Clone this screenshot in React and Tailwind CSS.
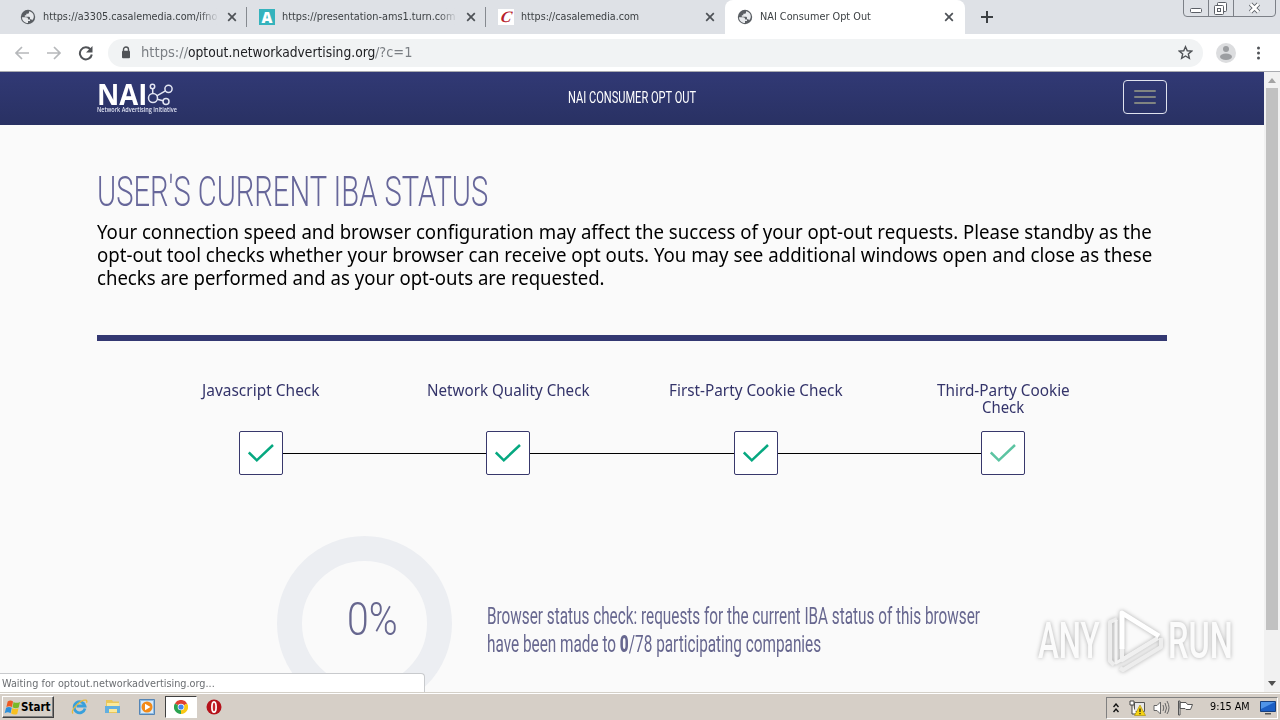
import React, { useLayoutEffect, useRef, useState } from "react";

const tabs = [
    { title: "https://a3305.casalemedia.com/ifno", icon: "globe", width: 174, fade: true },
    { title: "https://presentation-ams1.turn.com", icon: "turn", width: 174, fade: true },
    { title: "https://casalemedia.com", icon: "casale", width: 118 },
];

const intro = [
    { text: "Your connection speed and browser configuration may affect the success of your opt-out requests. Please standby as the", width: 1055 },
    { text: "opt-out tool checks whether your browser can receive opt outs. You may see additional windows open and close as these", width: 1055 },
    { text: "checks are performed and as your opt-outs are requested.", width: 508 },
];

const steps = [
    { lines: [{ text: "Javascript Check", width: 118 }] },
    { lines: [{ text: "Network Quality Check", width: 163 }] },
    { lines: [{ text: "First-Party Cookie Check", width: 174 }] },
    { lines: [{ text: "Third-Party Cookie", width: 133 }, { text: "Check", width: 42 }], pending: true },
];

// One line of text squeezed or stretched to a fixed width
function Fit({ width, className = "", children }) {
    const ref = useRef(null);
    const [scale, setScale] = useState(1);

    useLayoutEffect(() => {
        setScale(width / ref.current.offsetWidth);
    }, [width]);

    return (
        <span className={`block shrink-0 whitespace-nowrap ${className}`} style={{ width }}>
            <span ref={ref} className="inline-block origin-left" style={{ transform: `scaleX(${scale})` }}>
                {children}
            </span>
        </span>
    );
}

function Globe() {
    return (
        <svg className="size-4 shrink-0" viewBox="0 0 16 16">
            <circle cx="8" cy="8" r="7.2" fill="#5a5e63" />
            <path d="M2 8.200h4q2.200.1 2.300 2.200H10v1.500H8v2.100C4.400 14 2 11.400 2 8.200Z" fill="#e8eaed" />
            <path d="M9 2.200V3.500q0 1.300-1.500 1.300H6.300v1.500H4.800v1.400H9q1 0 1 1.200v1.400h.8q1 0 1.300 1C15.500 8 13.500 3 9 2.200Z" fill="#e8eaed" />
        </svg>
    );
}

function TabIcon({ name }) {
    if (name === "turn") {
        return (
            <span className="flex size-4 shrink-0 items-center justify-center bg-[#35b3bd] font-['Open_Sans',sans-serif] text-[15px] leading-none font-extrabold text-white">A</span>
        );
    }
    if (name === "casale") {
        return (
            <span className="flex size-4 shrink-0 items-center justify-center bg-white font-['Liberation_Serif',serif] text-[16px] leading-none text-[#b8222d] italic">
                <span className="-skew-x-12 font-bold">C</span>
            </span>
        );
    }
    return <Globe />;
}

function Close() {
    return (
        <svg className="size-[10px] shrink-0" viewBox="0 0 10 10">
            <path d="m1.200 1.200 7.600 7.600m0-7.600L1.200 8.800" stroke="#4d5156" strokeWidth="1.700" />
        </svg>
    );
}

function WindowButtons() {
    return (
        <svg className="h-[17px] w-[93px] shrink-0" viewBox="0 0 93 17" fill="none" stroke="#7c8087">
            <path d="M.5 0v13q0 3.500 3.500 3.500h85q3.500 0 3.500-3.500V0M25.500 0v16.500M50.500 0v16.500" />
            <g stroke="#5b5f66">
                <rect x="7.500" y="8.500" width="11" height="4" rx="1" fill="#fff" />
                <rect x="34.500" y="2.500" width="9" height="9" rx="1" fill="#fff" />
                <rect x="31.500" y="5.500" width="9" height="9" rx="1" fill="#fff" />
                <rect x="34.500" y="8.500" width="3" height="3" />
            </g>
            <path d="m67.500 4 8 8m0-8-8 8" stroke="#5b5f66" strokeWidth="4.500" />
            <path d="m67.500 4 8 8m0-8-8 8" stroke="#fff" strokeWidth="2.600" />
        </svg>
    );
}

function TabStrip() {
    return (
        <div className="flex h-[34px] shrink-0 bg-[#dee1e6] font-['DejaVu_Sans_Condensed','DejaVu_Sans',sans-serif] text-[11px] text-[#3c4043]">
            {tabs.map((tab, i) => (
                <div key={tab.title} className={`flex items-center ${i === 0 ? "w-[247px] pl-5" : "w-[239px] pl-3"}`}>
                    <TabIcon name={tab.icon} />
                    <div className="relative ml-[7px] w-[176px] pt-px">
                        <Fit width={tab.width}>{tab.title}</Fit>
                        {tab.fade && <div className="absolute inset-y-0 right-0 w-5 bg-linear-to-r from-transparent to-[#dee1e6]" />}
                    </div>
                    <div className="ml-2 flex"><Close /></div>
                    {i < 2 && <div className="ml-auto h-5 w-px bg-[#868a90]" />}
                </div>
            ))}
            <div className="flex w-[240px] items-center rounded-t-lg bg-white pl-3">
                <Globe />
                <Fit width={111} className="ml-[7px] pt-px">NAI Consumer Opt Out</Fit>
                <div className="mr-[11px] ml-auto flex"><Close /></div>
            </div>
            <svg className="mt-[11px] ml-[16px] size-3 shrink-0" viewBox="0 0 12 12">
                <path d="M6 0v12M0 6h12" stroke="#3c4043" strokeWidth="2" />
            </svg>
            <div className="mr-[4px] ml-auto"><WindowButtons /></div>
        </div>
    );
}

function Toolbar() {
    return (
        <div className="flex h-[38px] shrink-0 items-center border-b border-[#a9abb0] bg-white">
            <svg className="ml-[14px] h-4 w-20 shrink-0" viewBox="0 0 80 16" fill="none">
                <path d="M15 8H2m6-6L2 8l6 6M33 8h13m-6-6 6 6-6 6" stroke="#b6b8bb" strokeWidth="1.700" />
                <path d="M76.500 4.500A6 6 0 1 0 77.800 9.500" stroke="#505357" strokeWidth="2" />
                <path d="M78.500 1v6.500H72Z" fill="#505357" />
            </svg>
            <div className="ml-[14px] flex h-[28px] w-[1095px] items-center rounded-full bg-[#f1f3f4] pr-[10px] pl-[13px]">
                <svg className="h-[13px] w-[10px] shrink-0" viewBox="0 0 10 13">
                    <path d="M2.500 5V3.500a2.500 2.500 0 0 1 5 0V5" fill="none" stroke="#505357" strokeWidth="1.400" />
                    <rect x="1" y="4.800" width="8" height="7.400" rx="1" fill="#505357" />
                </svg>
                <div className="ml-[10px] flex font-['DejaVu_Sans_Condensed','DejaVu_Sans',sans-serif] text-[14px] text-[#7b7f84]">
                    <Fit width={47}>https://</Fit>
                    <Fit width={187} className="text-[#202124]">optout.networkadvertising.org</Fit>
                    <Fit width={37}>/?c=1</Fit>
                </div>
                <svg className="ml-auto size-[15px]" viewBox="0 0 16 16" fill="none" stroke="#505357" strokeWidth="1.500">
                    <path d="m8 1.800 1.900 4.300 4.700.4-3.600 3.100 1.100 4.600L8 11.700l-4.100 2.500L5 9.600 1.400 6.500l4.700-.4Z" />
                </svg>
            </div>
            <svg className="ml-[13px] size-5 shrink-0" viewBox="0 0 20 20">
                <circle cx="10" cy="10" r="10" fill="#dcdddf" />
                <circle cx="10" cy="6" r="3" fill="#9c9ea1" />
                <ellipse cx="10" cy="13.700" rx="6" ry="3.200" fill="#9c9ea1" />
            </svg>
            <svg className="ml-[20px] h-[14px] w-1 shrink-0" viewBox="0 0 4 14" fill="#505357">
                <circle cx="2.500" cy="2" r="1.500" />
                <circle cx="2.500" cy="7" r="1.500" />
                <circle cx="2.500" cy="12" r="1.500" />
            </svg>
        </div>
    );
}

function Header() {
    return (
        <header className="flex h-[53px] items-start bg-linear-to-b from-[#313975] to-[#293163] pr-[97px] pl-[97px] text-white">
            <div className="mt-[11px] w-[80px] font-['Open_Sans',sans-serif]">
                <div className="flex h-[23px] items-start">
                    <Fit width={50} className="text-[28px] leading-[23px] font-bold">NAI</Fit>
                    <svg className="h-[23px] w-[27px] shrink-0" viewBox="0 0 27 23" fill="none" stroke="#e3e6f3" strokeWidth="1.500">
                        <circle cx="6" cy="15" r="4.500" />
                        <circle cx="5.500" cy="3.500" r="2.200" />
                        <circle cx="21.500" cy="5.800" r="3.600" />
                        <circle cx="19" cy="18.500" r="3" />
                        <path d="M5.700 5.700v4.800M9.800 12.800l8.600-5M10.300 16.300l5.700 1.400" />
                    </svg>
                </div>
                <Fit width={80} className="text-[7px] leading-[8px] font-semibold text-[#dfe2f2]">Network Advertising Initiative</Fit>
            </div>
            <Fit width={128} className="mt-[14px] ml-[391px] font-['Roboto',sans-serif] text-[16px] leading-6">NAI CONSUMER OPT OUT</Fit>
            <button className="mt-[8px] ml-auto flex h-[34px] w-[44px] flex-col items-center justify-center gap-1 rounded border border-[#dfe2ee]">
                <span className="h-[2px] w-[22px] rounded bg-[#808481]" />
                <span className="h-[2px] w-[22px] rounded bg-[#808481]" />
                <span className="h-[2px] w-[22px] rounded bg-[#808481]" />
            </button>
        </header>
    );
}

function Step({ pending }) {
    return (
        <div className="flex size-[44px] shrink-0 items-center justify-center rounded-[2px] border border-[#38386c] bg-white">
            <svg className="h-5 w-[26px]" viewBox="0 0 26 20" fill="none">
                <path d="m.8 9.500 8 7.800L25 2" stroke={pending ? "#5cc4a2" : "#06a880"} strokeWidth="2.500" />
            </svg>
        </div>
    );
}

function Checks() {
    return (
        <>
            <div className="mt-[41px] grid grid-cols-4 px-[40px] font-['Noto_Sans',sans-serif] text-[16px] leading-[17px] text-[#34346a]">
                {steps.map((step, i) => (
                    <div key={i} className="flex h-[49px] flex-col items-center">
                        {step.lines.map((line) => <Fit key={line.text} width={line.width}>{line.text}</Fit>)}
                    </div>
                ))}
            </div>
            <div className="flex items-center px-[142px]">
                {steps.map((step, i) => (
                    <React.Fragment key={i}>
                        {i > 0 && <div className="h-px flex-1 bg-black" />}
                        <Step pending={step.pending} />
                    </React.Fragment>
                ))}
            </div>
        </>
    );
}

function Progress() {
    return (
        <div className="mt-[61px] flex pl-[180px] font-['Roboto',sans-serif] text-[#67678f]">
            <div className="flex size-[175px] shrink-0 items-start justify-center rounded-full border-[25px] border-[#eceef2]">
                <Fit width={51} className="mt-[28px] ml-[16px] text-[46px] leading-[60px] font-light">0%</Fit>
            </div>
            <div className="mt-[67px] ml-[35px] text-[23px] leading-[28px]">
                <Fit width={493}>Browser status check: requests for the current IBA status of this browser</Fit>
                <Fit width={334}>have been made to <b className="font-black">0</b>/78 participating companies</Fit>
            </div>
        </div>
    );
}

function Watermark() {
    return (
        <div className="absolute top-[537px] left-[1038px] flex h-[64px] w-[195px] items-center justify-between font-['Roboto',sans-serif] text-[50px] leading-[64px] font-medium text-[#fbfbfb] drop-shadow-[0_0_2px_rgba(0,0,0,0.3)]">
            <Fit width={62}>ANY</Fit>
            <svg className="h-[64px] w-[58px] shrink-0" viewBox="0 0 58 64" fill="none" strokeLinejoin="round">
                <path d="M12 10 5 13v39l4 4M15 59l3 2 38-23v-9" stroke="#ededed" strokeWidth="4" />
                <path d="M11 11v43l40-24" stroke="#f3f3f3" strokeWidth="3" />
                <path d="M17 4v47l36-22" stroke="#f0f0f0" strokeWidth="4" />
                <path d="M17 40V4l37 23" stroke="#fff" strokeWidth="5" />
            </svg>
            <Fit width={65}>RUN</Fit>
        </div>
    );
}

function Scrollbar() {
    return (
        <div className="flex w-4 shrink-0 flex-col items-center justify-between bg-[#f1f1f1]">
            <svg className="mt-[6px] h-[5px] w-2 shrink-0" viewBox="0 0 8 5"><path d="m0 5 4-5 4 5Z" fill="#a3a3a3" /></svg>
            <div className="mt-[5px] mb-auto h-[542px] w-3 bg-[#c1c1c1]" />
            <svg className="mb-[6px] h-[5px] w-2 shrink-0" viewBox="0 0 8 5"><path d="m0 0 4 5 4-5Z" fill="#505050" /></svg>
        </div>
    );
}

function Flag() {
    return (
        <svg className="h-[15px] w-[17px] shrink-0" viewBox="0 0 15 14">
            <path d="M3 1.500q2.500-2 5 0L7 6.500q-2.500-1.500-5.200 0Z" fill="#ee5a24" />
            <path d="M8.500 1.800q2.500 1.700 6 0L13.300 7q-3 1.400-5.800-.2Z" fill="#79b928" />
            <path d="M1.500 7.200q2.700-1.500 5.300 0L5.700 12.300q-2.500-1.700-5.500 0Z" fill="#2c8fdb" />
            <path d="M7.300 7.500q2.700 1.600 5.800.2L11.900 13q-2.800 1.200-5.700-.4Z" fill="#f8c020" />
        </svg>
    );
}

function Taskbar() {
    return (
        <div className="flex h-[28px] shrink-0 items-center border-t border-[#d4d0c8] bg-[#d6cfc7] shadow-[inset_0_1px_0_#fff]">
            <button className="mt-px ml-[2px] flex h-[22px] w-[52px] items-center border border-t-white border-r-[#404040] border-b-[#404040] border-l-white pl-px shadow-[inset_-1px_-1px_0_#808080]">
                <Flag />
                <Fit width={29} className="pt-px font-['DejaVu_Sans_Condensed','DejaVu_Sans',sans-serif] text-[11.5px] font-bold text-black">Start</Fit>
            </button>
            {/* Internet Explorer */}
            <svg className="ml-[17px] size-[17px]" viewBox="0 0 17 17" fill="none">
                <path d="M14 10.500A5.500 5.500 0 1 1 14 8H5.500" stroke="#38a0dc" strokeWidth="2.800" />
                <path d="M2 15.500C-1 12 10 1 15 2.200c1 .3 1 1.500.5 2.500" stroke="#e9b93a" strokeWidth="1.300" />
            </svg>
            {/* Explorer */}
            <svg className="ml-[16px] size-[17px]" viewBox="0 0 17 17">
                <path d="M2 2h6l1 1.500h6V15H2Z" fill="#e9c65a" />
                <path d="M3 5h12v9H3Z" fill="#fae99b" />
                <path d="M1 8h15v7h-3v-4H5v4H1Z" fill="#62afe0" />
            </svg>
            {/* Media Player */}
            <svg className="ml-[18px] size-4" viewBox="0 0 16 16">
                <path d="M.5.500h15v15H.5Z" fill="#8ebce4" stroke="#5585b5" />
                <path d="M2 2h12v12H2Z" fill="#d8eafa" />
                <circle cx="8" cy="8" r="5.500" fill="#f28a18" />
                <path d="m6 4.800 5.500 3.200L6 11.200Z" fill="#fff" />
            </svg>
            {/* Chrome */}
            <div className="ml-[10px] flex h-[22px] w-[32px] items-center justify-center border border-t-[#404040] border-r-white border-b-white border-l-[#404040] bg-white">
                <svg className="size-[14px]" viewBox="0 0 14 14">
                    <path d="M7 7 .9 3.500A7 7 0 0 1 13.100 3.500Z" fill="#df4032" />
                    <path d="M7 7V14A7 7 0 0 1 .9 3.500Z" fill="#2aa350" />
                    <path d="M7 7l6.100-3.500A7 7 0 0 1 7 14Z" fill="#fac814" />
                    <circle cx="7" cy="7" r="3.300" fill="#fff" />
                    <circle cx="7" cy="7" r="2.600" fill="#4385ee" />
                </svg>
            </div>
            {/* Opera */}
            <svg className="mt-px ml-[9px] size-4" viewBox="0 0 16 16">
                <circle cx="8" cy="8" r="7.500" fill="#b5121b" />
                <ellipse cx="8" cy="8" rx="2.100" ry="5.200" fill="#c8242b" stroke="#fff" strokeWidth="1.700" />
            </svg>
            <div className="mt-[2px] mr-[2px] ml-auto flex h-[22px] w-[172px] items-center border border-t-[#808080] border-r-white border-b-white border-l-[#808080] pl-[6px]">
                <svg className="h-[10px] w-[6px]" viewBox="0 0 6 10" fill="none" stroke="#111" strokeWidth="1.400">
                    <path d="m.5 4 2.500-3 2.500 3m-5 5L3 6l2.500 3" />
                </svg>
                <svg className="ml-[10px] h-4 w-[17px]" viewBox="0 0 17 16">
                    <path d="M5.500 2.500h10v9h-10Z" fill="#e8e8e8" stroke="#555" />
                    <path d="M1 1h4v4H1Zm2 4v9h5" fill="#fff" stroke="#444" />
                    <path d="m11 5 5.500 10.500h-11Z" fill="#f6d313" stroke="#a68a00" strokeWidth=".6" />
                    <path d="M11 8.500v3.500m0 1v1.300" stroke="#222" strokeWidth="1.300" />
                </svg>
                <svg className="ml-[7px] h-4 w-[17px]" viewBox="0 0 17 16" fill="none" stroke="#666">
                    <path d="M1 5.500h3L7.500 2v12L4 10.500H1Z" fill="#fff" />
                    <path d="M10 5q1.500 3 0 6m2-8q3 5 0 10m2-12q4 7 0 13" />
                </svg>
                <svg className="ml-[7px] h-4 w-[17px]" viewBox="0 0 17 16" fill="#fff" stroke="#555">
                    <path d="M1.500 1h1.500v14H1.500ZM3 2.500h6l1.500 2h5l-2 5H9L8 8.500H3Z" />
                </svg>
                <Fit width={40} className="ml-[16px] font-['DejaVu_Sans_Condensed','DejaVu_Sans',sans-serif] text-[11px] text-black">9:15 AM</Fit>
                <svg className="ml-[10px] h-[14px] w-4" viewBox="0 0 16 14">
                    <path d="M.5.500h15v10H.5Z" fill="#1c5fc4" stroke="#17407e" />
                    <path d="M1 1h14L1 8Z" fill="#4f94e8" />
                    <path d="M5 12h6v1.500H5Z" fill="#555" />
                </svg>
            </div>
        </div>
    );
}

export default function App() {
    return (
        <div className="flex h-[720px] w-[1280px] flex-col overflow-hidden bg-[#fafafa]">
            <TabStrip />
            <Toolbar />
            <div className="relative flex h-[620px] shrink-0 overflow-hidden">
                <div className="w-[1264px] shrink-0">
                    <Header />
                    <main className="px-[97px] pt-[37px]">
                        <h1 className="font-['Roboto',sans-serif] text-[42px] leading-[60px] font-light text-[#67679a]">
                            <Fit width={391}>USER&apos;S CURRENT IBA STATUS</Fit>
                        </h1>
                        <div className="mt-[-2px] font-['Noto_Sans',sans-serif] text-[20px] leading-[23px] text-black">
                            {intro.map((line) => <Fit key={line.text} width={line.width}>{line.text}</Fit>)}
                        </div>
                        <div className="mt-[46px] h-[6px] bg-[#333872]" />
                        <Checks />
                        <Progress />
                    </main>
                </div>
                <Scrollbar />
                <Watermark />
                <div className="absolute bottom-0 left-0 h-[19px] w-[425px] rounded-tr border-t border-r border-[#c8cacd] bg-white pl-[2px] font-['DejaVu_Sans_Condensed','DejaVu_Sans',sans-serif] text-[11px] leading-[19px] text-[#6b6e72]">
                    <Fit width={213}>Waiting for optout.networkadvertising.org...</Fit>
                </div>
            </div>
            <Taskbar />
        </div>
    );
}
